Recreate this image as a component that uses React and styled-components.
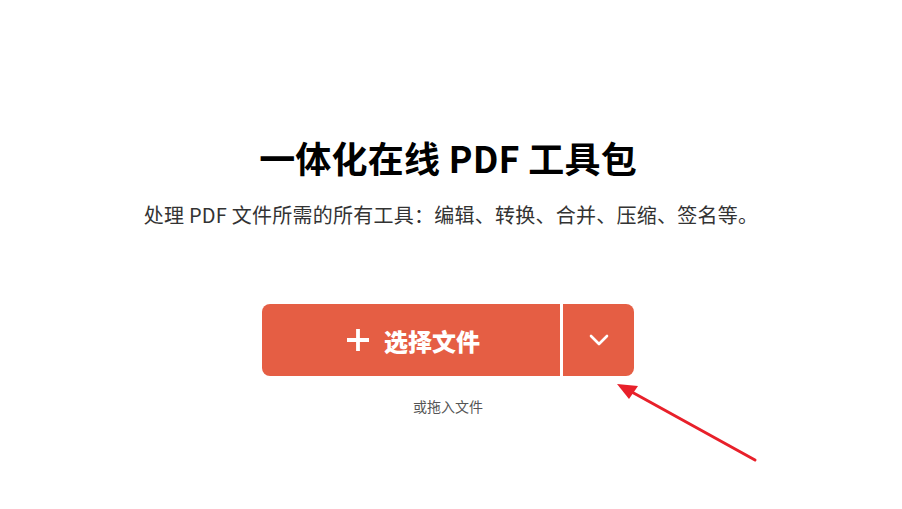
import React from 'react';
import styled, { createGlobalStyle } from 'styled-components';

const GlobalStyle = createGlobalStyle`
  html, body {
    margin: 0;
    padding: 0;
    background: #fff;
  }
  body {
    font-family: "Noto Sans CJK SC", "Noto Sans", sans-serif;
    color: #333;
  }
`;

const Page = styled.div`
  position: relative;
  width: 902px;
  height: 509px;
  overflow: hidden;
  box-sizing: border-box;
  padding: 134px 6px 0 0;
  display: flex;
  flex-direction: column;
  align-items: center;
`;

const Title = styled.h1`
  margin: 0;
  font-size: 36px;
  line-height: 46px;
  font-weight: 700;
  letter-spacing: 0.2px;
  color: #000;
`;

const Subtitle = styled.p`
  margin: 20px 0 0 6px;
  font-size: 20px;
  line-height: 30px;
  font-weight: 400;
  letter-spacing: 0.25px;
  color: #333;
`;

const ButtonGroup = styled.div`
  margin-top: 74px;
  display: flex;
  gap: 3px;
  height: 72px;
`;

const MainButton = styled.button`
  width: 298px;
  height: 100%;
  border: none;
  border-radius: 8px 0 0 8px;
  background: #e55e44;
  color: #fff;
  display: flex;
  align-items: center;
  justify-content: center;
  gap: 14px;
  padding: 0 0 0 4px;
  font-family: inherit;
  font-size: 24px;
  font-weight: 900;
  cursor: pointer;
`;

const DropButton = styled.button`
  width: 71px;
  height: 100%;
  border: none;
  border-radius: 0 8px 8px 0;
  background: #e55e44;
  display: flex;
  align-items: center;
  justify-content: center;
  padding: 0;
  cursor: pointer;
`;

const Hint = styled.div`
  margin-top: 20px;
  font-size: 14px;
  line-height: 20px;
  color: #555;
`;

const Arrow = styled.svg`
  position: absolute;
  left: 0;
  top: 0;
  pointer-events: none;
`;

function PlusIcon() {
  return (
    <svg width="24" height="24" viewBox="0 0 24 24">
      <path d="M12 1v22M1 12h22" stroke="#fff" strokeWidth="3.8" />
    </svg>
  );
}

function Chevron() {
  return (
    <svg width="20" height="12" viewBox="0 0 20 12">
      <path d="M2 2l8 8 8-8" stroke="#fff" strokeWidth="2.6" fill="none" strokeLinecap="round" strokeLinejoin="round" />
    </svg>
  );
}

export default function App() {
  return (
    <>
      <GlobalStyle />
      <Page>
        <Title>一体化在线 PDF 工具包</Title>
        <Subtitle>处理 PDF 文件所需的所有工具：编辑、转换、合并、压缩、签名等。</Subtitle>
        <ButtonGroup>
          <MainButton>
            <PlusIcon />
            <span>选择文件</span>
          </MainButton>
          <DropButton>
            <Chevron />
          </DropButton>
        </ButtonGroup>
        <Hint>或拖入文件</Hint>
        <Arrow width="902" height="509" viewBox="0 0 902 509">
          <line x1="755" y1="460" x2="630" y2="391" stroke="#e8202a" strokeWidth="3" strokeLinecap="round" />
          <polygon points="617,384 638,386 629,399" fill="#e8202a" />
        </Arrow>
      </Page>
    </>
  );
}
